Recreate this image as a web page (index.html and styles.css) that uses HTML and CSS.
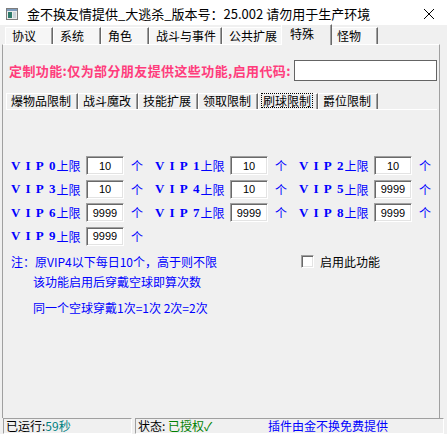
FILE: index.html
```html
<!DOCTYPE html>
<html lang="zh-CN">
<head>
  <meta charset="UTF-8">
  <title>金不换友情提供_大逃杀</title>
  <link rel="stylesheet" href="styles.css">
</head>
<body>
  <div class="titlebar">
    <svg class="app-icon" viewBox="0 0 12 12">
      <rect x="0.5" y="0.5" width="11" height="11" fill="#ececec" stroke="#7c7c7c"/>
      <rect x="1" y="1" width="10" height="2" fill="#7d9bbd"/>
      <rect x="2" y="4" width="4" height="6" fill="#2f7a6b"/>
      <rect x="7" y="4" width="3" height="6" fill="#c9d3d9"/>
    </svg>
    <span class="title">金不换友情提供_大逃杀_版本号：25.002 请勿用于生产环境</span>
    <svg class="close" viewBox="0 0 10 10">
      <path d="M0 0 L10 10 M10 0 L0 10" stroke="#000" stroke-width="1"/>
    </svg>
  </div>

  <div class="tabs">
    <div class="tab">协议</div>
    <div class="tab">系统</div>
    <div class="tab">角色</div>
    <div class="tab">战斗与事件</div>
    <div class="tab">公共扩展</div>
    <div class="tab active">特殊</div>
    <div class="tab">怪物</div>
  </div>

  <div class="panel">
    <div class="code-row">
      <span class="code-label">定制功能:仅为部分朋友提供这些功能,启用代码:</span>
      <input class="code-input" type="text">
    </div>

    <div class="subtabs">
      <div class="subtab">爆物品限制</div>
      <div class="subtab">战斗魔改</div>
      <div class="subtab">技能扩展</div>
      <div class="subtab">领取限制</div>
      <div class="subtab active"><span class="focus">刷球限制</span></div>
      <div class="subtab">爵位限制</div>
    </div>

    <div class="vip-grid">
      <div class="vip"><span class="vip-label"><b class="vip-name">VIP<span class="lvl">0</span></b>上限</span><input class="num" value="10"><span class="unit">个</span></div>
      <div class="vip"><span class="vip-label"><b class="vip-name">VIP<span class="lvl">1</span></b>上限</span><input class="num" value="10"><span class="unit">个</span></div>
      <div class="vip"><span class="vip-label"><b class="vip-name">VIP<span class="lvl">2</span></b>上限</span><input class="num" value="10"><span class="unit">个</span></div>
      <div class="vip"><span class="vip-label"><b class="vip-name">VIP<span class="lvl">3</span></b>上限</span><input class="num" value="10"><span class="unit">个</span></div>
      <div class="vip"><span class="vip-label"><b class="vip-name">VIP<span class="lvl">4</span></b>上限</span><input class="num" value="10"><span class="unit">个</span></div>
      <div class="vip"><span class="vip-label"><b class="vip-name">VIP<span class="lvl">5</span></b>上限</span><input class="num" value="9999"><span class="unit">个</span></div>
      <div class="vip"><span class="vip-label"><b class="vip-name">VIP<span class="lvl">6</span></b>上限</span><input class="num" value="9999"><span class="unit">个</span></div>
      <div class="vip"><span class="vip-label"><b class="vip-name">VIP<span class="lvl">7</span></b>上限</span><input class="num" value="9999"><span class="unit">个</span></div>
      <div class="vip"><span class="vip-label"><b class="vip-name">VIP<span class="lvl">8</span></b>上限</span><input class="num" value="9999"><span class="unit">个</span></div>
      <div class="vip"><span class="vip-label"><b class="vip-name">VIP<span class="lvl">9</span></b>上限</span><input class="num" value="9999"><span class="unit">个</span></div>
    </div>

    <div class="notes">
      <div class="note-first">
        <span>注：原VIP4以下每日10个，高于则不限</span>
        <label class="enable"><span class="checkbox"></span>启用此功能</label>
      </div>
      <div class="note-line">该功能启用后穿戴空球即算次数</div>
      <div class="note-line last">同一个空球穿戴1次=1次 2次=2次</div>
    </div>
  </div>

  <div class="statusbar">
    <div class="status-cell first">已运行:<span class="elapsed">59秒</span></div>
    <div class="status-cell second">
      <span>状态: <span class="granted">已授权✓</span></span>
      <span class="credit">插件由金不换免费提供</span>
    </div>
  </div>
  <div class="desktop"></div>
</body>
</html>
```

FILE: styles.css
```css
* {
  box-sizing: border-box;
}
body {
  margin: 0;
  width: 447px;
  height: 439px;
  overflow: hidden;
  background: #f0f0f0;
  font-family: "Noto Sans CJK SC", sans-serif;
  font-size: 12px;
  color: #000;
}

/* window caption */
.titlebar {
  height: 25px;
  background: #fff;
  display: flex;
  align-items: center;
  padding: 2px 0 0 6px;
}
.app-icon {
  width: 12px;
  height: 12px;
}
.title {
  margin-left: 9px;
  font-size: 13px;
  white-space: nowrap;
}
.close {
  margin-left: auto;
  margin-right: 13px;
  width: 10px;
  height: 10px;
}

/* main tab strip */
.tabs {
  display: flex;
  align-items: flex-end;
  height: 19px;
  padding-left: 5px;
}
.tab {
  height: 17px;
  line-height: 16px;
  min-width: 48px;
  padding: 0 5px 0 6px;
  background: #f6f6f6;
  border-top: 1px solid #fff;
  border-left: 1px solid #fff;
  border-right: 1px solid #696969;
  box-shadow: inset -1px 0 #a0a0a0;
  white-space: nowrap;
}
.tab.active {
  position: relative;
  z-index: 1;
  height: 21px;
  min-width: 51px;
  margin: 0 -2px -1px;
  padding: 1px 6px 0 8px;
  background: #f0f0f0;
}

.panel {
  height: 374px;
  margin: 0 7px 0 2px;
  padding: 15px 0 0 4px;
  border-top: 1px solid #fff;
  border-left: 1px solid #a0a0a0;
  border-right: 1px solid #a0a0a0;
}

.code-row {
  display: flex;
  align-items: center;
  height: 21px;
}
.code-label {
  margin-left: 2px;
  font-size: 13px;
  font-weight: bold;
  letter-spacing: 0.4px;
  color: #ff3c7c;
  white-space: nowrap;
}
.code-input {
  margin-left: auto;
  margin-right: 2px;
  width: 143px;
  height: 21px;
  border: 1px solid #646464;
  background: #fff;
}

/* inner tab strip */
.subtabs {
  display: flex;
  height: 17px;
  margin: 12px 2px 0 -1px;
  border-bottom: 1px solid #fff;
}
.subtab {
  height: 16px;
  line-height: 14px;
  padding: 0 6px 0 4px;
  border-top: 1px solid #fff;
  border-left: 1px solid #fff;
  border-right: 1px solid #696969;
  box-shadow: inset -1px 0 #a0a0a0;
  white-space: nowrap;
}
.subtab.active {
  padding: 0 5px 0 3px;
}
.focus {
  display: inline-block;
  line-height: 13px;
  padding: 0 1px;
  outline: 1px dotted #000;
}

.vip-grid {
  display: grid;
  grid-template-columns: repeat(3, 144px);
  row-gap: 4.5px;
  margin-top: 46px;
  padding-left: 4px;
}
.vip {
  display: flex;
  align-items: center;
  height: 19px;
  color: #0000ff;
}
.vip-label {
  display: flex;
  align-items: center;
  width: 75px;
  white-space: nowrap;
}
.vip-name {
  font-family: "Liberation Serif", serif;
  font-size: 13px;
  letter-spacing: 5.2px;
}
.lvl {
  letter-spacing: 0;
  margin-right: 1px;
}
.num {
  width: 38px;
  height: 19px;
  padding: 0;
  text-align: center;
  font-family: "Liberation Sans", sans-serif;
  font-size: 11px;
  color: #000;
  background: #fff;
  border: 1px solid;
  border-color: #a0a0a0 #fff #fff #a0a0a0;
  box-shadow: inset 1px 1px #696969, inset -1px -1px #e3e3e3;
}
.unit {
  margin-left: 7px;
}

.notes {
  margin-top: 8px;
  padding-left: 4px;
  color: #0000ff;
}
.note-first {
  display: grid;
  grid-template-columns: 290px auto;
  align-items: center;
  height: 16px;
  line-height: 16px;
}
.enable {
  display: flex;
  align-items: center;
  color: #000;
}
.checkbox {
  width: 13px;
  height: 13px;
  margin-right: 6px;
  background: #fff;
  border: 1px solid;
  border-color: #a0a0a0 #fff #fff #a0a0a0;
  box-shadow: inset 1px 1px #696969, inset -1px -1px #e3e3e3;
}
.note-line {
  margin-top: 4px;
  padding-left: 22px;
  line-height: 16px;
}
.note-line.last {
  margin-top: 10px;
}

/* status bar */
.statusbar {
  display: flex;
  gap: 3px;
  height: 16px;
  padding: 0 3px 0 3px;
}
.status-cell {
  height: 16px;
  line-height: 14px;
  padding-left: 2px;
  border: 1px solid;
  border-color: #a0a0a0 #fff #fff #a0a0a0;
  white-space: nowrap;
}
.status-cell.first {
  width: 129px;
}
.status-cell.second {
  flex: 1;
  display: grid;
  grid-template-columns: 130px auto;
}
.elapsed {
  color: #008080;
}
.granted {
  color: #008000;
}
.credit {
  color: #0000ff;
}
.desktop {
  height: 6px;
  background: #fff;
}
```
